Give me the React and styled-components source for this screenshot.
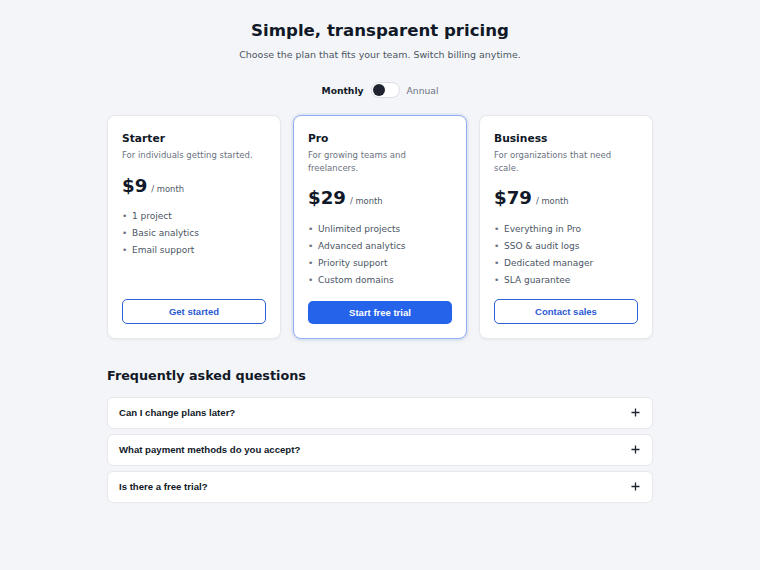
import React, { useState } from "react"
import styled, { createGlobalStyle } from "styled-components"

const GlobalStyle = createGlobalStyle`
  body {
    margin: 0;
    background: #f4f5f8;
    font-family: "DejaVu Sans", sans-serif;
    color: #111827;
  }
`

const Page = styled.div`
  width: 546px;
  margin: 0 auto;
  padding-top: 21px;
  padding-bottom: 40px;
`

const Title = styled.h1`
  margin: 0;
  text-align: center;
  font-size: 16.6px;
  line-height: 20px;
  font-weight: 700;
  color: #111827;
`

const Subtitle = styled.p`
  margin: 7px 0 0;
  text-align: center;
  font-size: 9.45px;
  line-height: 14px;
  color: #4b5563;
`

const BillingRow = styled.div`
  margin-top: 20px;
  display: flex;
  align-items: center;
  justify-content: center;
  gap: 7px;
  height: 16px;
`

const BillingLabel = styled.span`
  font-size: 9.2px;
  font-weight: ${p => (p.$active ? 700 : 400)};
  color: ${p => (p.$active ? "#111827" : "#6b7280")};
`

const Track = styled.button`
  width: 29px;
  height: 16px;
  padding: 1px;
  border: 1px solid #dcdfe5;
  border-radius: 8px;
  background: #fff;
  display: flex;
  align-items: center;
  justify-content: ${p => (p.$on ? "flex-end" : "flex-start")};
  cursor: pointer;
  box-sizing: border-box;
`

const Knob = styled.span`
  width: 12px;
  height: 12px;
  border-radius: 50%;
  background: #1f2430;
`

const Plans = styled.div`
  margin-top: 17px;
  display: grid;
  grid-template-columns: repeat(3, 1fr);
  gap: 12px;
`

const Card = styled.div`
  display: flex;
  flex-direction: column;
  box-sizing: border-box;
  padding: 16px 14px 14px 14px;
  background: #fff;
  border-radius: 8px;
  border: 1px solid ${p => (p.$featured ? "#8eaef0" : "#e6e8ec")};
  box-shadow: ${p =>
    p.$featured
      ? "0 0 0 2px rgba(37, 99, 235, 0.07), 0 2px 6px rgba(17, 24, 39, 0.05)"
      : "0 1px 3px rgba(17, 24, 39, 0.05)"};
`

const PlanName = styled.h3`
  margin: 0;
  font-size: 10.7px;
  line-height: 14px;
  font-weight: 700;
`

const PlanDesc = styled.p`
  margin: 3px 0 0;
  font-size: 8.5px;
  line-height: 12.5px;
  color: #6b7280;
`

const PriceRow = styled.div`
  margin-top: 12px;
  display: flex;
  align-items: baseline;
  gap: 4px;
  line-height: 24px;
`

const Amount = styled.span`
  font-size: 18.2px;
  font-weight: 700;
  color: #111827;
`

const Period = styled.span`
  font-size: 8.4px;
  color: #4b5563;
`

const Features = styled.ul`
  margin: 7.5px 0 10.5px;
  padding: 0;
  list-style: none;
`

const Feature = styled.li`
  display: flex;
  font-size: 9px;
  line-height: 17px;
  color: #4b5563;

  &::before {
    content: "•";
    width: 10px;
    flex: none;
    color: #6b7280;
  }
`

const PlanButton = styled.button`
  margin-top: auto;
  width: 100%;
  box-sizing: border-box;
  height: ${p => (p.$primary ? "22.5px" : "24.5px")};
  border-radius: 5px;
  font-family: "Liberation Sans", Arial, sans-serif;
  font-weight: 700;
  font-size: 9.5px;
  cursor: pointer;
  border: ${p => (p.$primary ? "none" : "1.5px solid #2f5fd6")};
  background: ${p => (p.$primary ? "#2563eb" : "#fff")};
  color: ${p => (p.$primary ? "#fff" : "#2d5bd4")};
`

const FaqTitle = styled.h2`
  margin: 28px 0 0;
  font-size: 12.75px;
  line-height: 18px;
  font-weight: 700;
`

const FaqList = styled.div`
  margin-top: 12px;
  display: flex;
  flex-direction: column;
  gap: 5px;
`

const FaqItem = styled.button`
  height: 32px;
  display: flex;
  align-items: center;
  justify-content: space-between;
  padding: 0 12px 0 11px;
  background: #fff;
  border: 1px solid #e6e8ec;
  border-radius: 6px;
  font-family: "Liberation Sans", Arial, sans-serif;
  font-weight: 700;
  font-size: 9.6px;
  color: #111827;
  cursor: pointer;
  text-align: left;
`

const plans = [
  {
    name: "Starter",
    desc: "For individuals getting started.",
    price: "$9",
    features: ["1 project", "Basic analytics", "Email support"],
    cta: "Get started",
  },
  {
    name: "Pro",
    desc: "For growing teams and freelancers.",
    price: "$29",
    features: ["Unlimited projects", "Advanced analytics", "Priority support", "Custom domains"],
    cta: "Start free trial",
    featured: true,
  },
  {
    name: "Business",
    desc: "For organizations that need scale.",
    price: "$79",
    features: ["Everything in Pro", "SSO & audit logs", "Dedicated manager", "SLA guarantee"],
    cta: "Contact sales",
  },
]

const faqs = ["Can I change plans later?", "What payment methods do you accept?", "Is there a free trial?"]

const PlusIcon = () => (
  <svg width="9" height="9" viewBox="0 0 9 9">
    <path d="M4.5 0.5v8M0.5 4.5h8" stroke="#1f2430" strokeWidth="1.3" fill="none" />
  </svg>
)

export default function App() {
  const [annual, setAnnual] = useState(false)
  return (
    <Page>
      <GlobalStyle />
      <Title>Simple, transparent pricing</Title>
      <Subtitle>Choose the plan that fits your team. Switch billing anytime.</Subtitle>
      <BillingRow>
        <BillingLabel $active={!annual}>Monthly</BillingLabel>
        <Track $on={annual} onClick={() => setAnnual(!annual)}>
          <Knob />
        </Track>
        <BillingLabel $active={annual}>Annual</BillingLabel>
      </BillingRow>

      <Plans>
        {plans.map(plan => (
          <Card key={plan.name} $featured={plan.featured}>
            <PlanName>{plan.name}</PlanName>
            <PlanDesc>{plan.desc}</PlanDesc>
            <PriceRow>
              <Amount>{plan.price}</Amount>
              <Period>/ month</Period>
            </PriceRow>
            <Features>
              {plan.features.map(f => (
                <Feature key={f}>{f}</Feature>
              ))}
            </Features>
            <PlanButton $primary={plan.featured}>{plan.cta}</PlanButton>
          </Card>
        ))}
      </Plans>

      <FaqTitle>Frequently asked questions</FaqTitle>
      <FaqList>
        {faqs.map(q => (
          <FaqItem key={q}>
            <span>{q}</span>
            <PlusIcon />
          </FaqItem>
        ))}
      </FaqList>
    </Page>
  )
}
